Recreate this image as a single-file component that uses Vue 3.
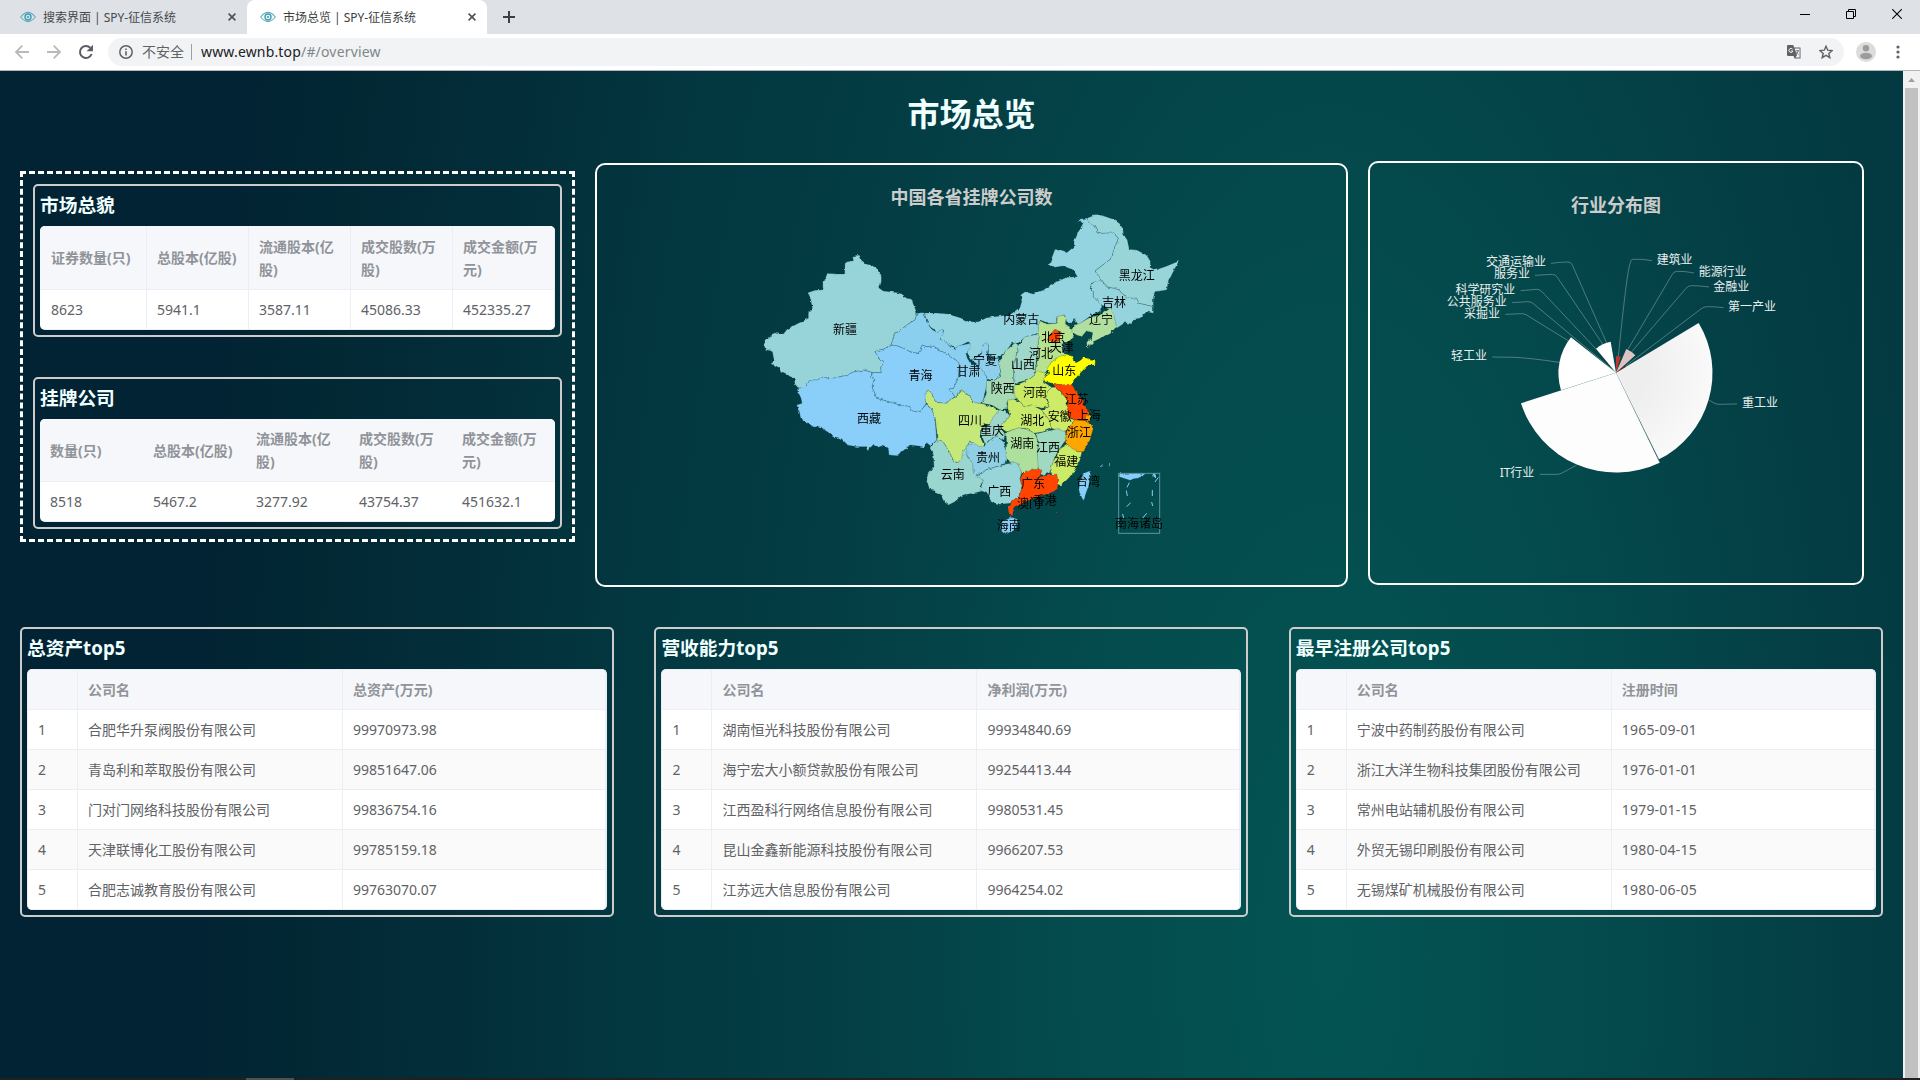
<script setup>
const marketOverview = {
  title: '市场总貌',
  bordered: true,
  heads: ['证券数量(只)', '总股本(亿股)', '流通股本(亿股)', '成交股数(万股)', '成交金额(万元)'],
  cells: ['8623', '5941.1', '3587.11', '45086.33', '452335.27'],
}
const listedCompanies = {
  title: '挂牌公司',
  bordered: false,
  heads: ['数量(只)', '总股本(亿股)', '流通股本(亿股)', '成交股数(万股)', '成交金额(万元)'],
  cells: ['8518', '5467.2', '3277.92', '43754.37', '451632.1'],
}
const summaries = [marketOverview, listedCompanies]

const rankings = [
  {
    title: '总资产top5',
    column: '总资产(万元)',
    rows: [
      ['合肥华升泵阀股份有限公司', '99970973.98'],
      ['青岛利和萃取股份有限公司', '99851647.06'],
      ['门对门网络科技股份有限公司', '99836754.16'],
      ['天津联博化工股份有限公司', '99785159.18'],
      ['合肥志诚教育股份有限公司', '99763070.07'],
    ],
  },
  {
    title: '营收能力top5',
    column: '净利润(万元)',
    rows: [
      ['湖南恒光科技股份有限公司', '99934840.69'],
      ['海宁宏大小额贷款股份有限公司', '99254413.44'],
      ['江西盈科行网络信息股份有限公司', '9980531.45'],
      ['昆山金鑫新能源科技股份有限公司', '9966207.53'],
      ['江苏远大信息股份有限公司', '9964254.02'],
    ],
  },
  {
    title: '最早注册公司top5',
    column: '注册时间',
    dates: true,
    rows: [
      ['宁波中药制药股份有限公司', '1965-09-01'],
      ['浙江大洋生物科技集团股份有限公司', '1976-01-01'],
      ['常州电站辅机股份有限公司', '1979-01-15'],
      ['外贸无锡印刷股份有限公司', '1980-04-15'],
      ['无锡煤矿机械股份有限公司', '1980-06-05'],
    ],
  },
]

// Province outlines, split by map sheet; each sheet has its own origin.
const sheets = [
  {
    at: 'translate(920 190) scale(.33333)',
    shapes: [
      ['#93d4e0', '12,369 50,369 85,372 120,383 150,395 175,395 200,383 240,378 270,374 300,352 305,335 302,315 315,305 340,312 370,300 400,280 440,262 472,260 460,240 430,228 405,232 387,225 405,178 440,188 462,170 462,155 475,125 490,98 478,95 480,87 502,84 508,100 530,112 535,130 580,128 595,145 580,185 575,205 525,243 545,270 515,280 510,295 520,305 520,320 545,345 545,362 515,375 475,405 462,385 455,400 440,395 432,375 410,385 410,400 385,400 360,390 355,405 358,430 320,440 290,460 275,460 255,490 230,505 205,500 205,465 190,465 185,490 155,510 142,490 140,475 150,460 145,455 105,475 85,465 60,448 72,420 50,425 30,410 20,390'],
      ['#97d5d8', '502,84 520,77 545,76 580,88 598,100 608,115 612,135 622,150 628,178 650,180 680,195 692,215 690,232 705,240 735,230 777,213 765,235 745,275 740,300 705,305 700,325 700,350 680,345 655,340 650,325 620,325 600,300 560,290 545,270 525,243 575,205 580,185 595,145 580,128 535,130 530,112 508,100'],
      ['#95d4dc', '545,270 560,290 600,300 620,325 650,325 655,340 680,345 700,350 700,370 680,365 660,385 640,388 635,402 615,398 590,415 580,380 560,352 545,345 520,320 520,305 510,285 530,272'],
    ],
  },
  {
    at: 'translate(740 200) scale(.33333)',
    shapes: [
      ['#97d4da', '355,165 361,177 378,192 395,196 410,205 424,228 424,245 418,265 430,273 475,278 490,285 500,295 514,297 524,322 531,340 525,360 500,375 485,388 478,395 465,398 460,415 452,438 430,447 405,455 413,468 420,480 432,488 422,502 424,518 395,517 370,510 340,516 320,526 270,537 250,530 235,540 210,540 195,562 175,565 165,553 162,535 140,525 122,517 118,503 92,490 103,485 97,455 76,448 71,430 85,412 110,397 130,402 142,387 175,370 205,355 205,338 217,325 212,295 203,278 225,271 250,269 248,255 262,220 290,222 314,222 315,190 322,185 340,182 338,168'],
      ['#89cff9', '175,565 195,562 210,540 235,540 250,530 270,537 320,526 340,516 370,510 395,517 395,530 402,540 397,560 410,595 430,600 470,612 510,620 516,632 540,637 548,625 560,612 572,622 585,650 588,690 590,720 572,738 560,728 553,742 535,738 510,735 490,752 470,767 447,765 445,745 425,738 415,742 400,735 388,742 384,757 378,740 350,740 320,735 300,715 285,712 262,695 232,678 222,682 182,655 178,635 170,615 186,610 183,595 176,580'],
      ['#8bcfef', '531,340 540,338 552,338 560,365 575,390 590,395 608,388 610,400 600,418 615,422 625,435 643,448 655,438 690,430 690,445 678,460 682,475 695,495 715,492 740,530 743,545 737,570 730,600 722,610 700,610 690,590 665,570 655,575 650,595 645,590 627,567 640,565 650,545 655,530 658,495 655,485 640,475 625,463 600,452 580,438 560,440 546,435 545,450 535,461 510,455 490,445 470,437 452,438 460,415 465,398 478,395 485,388 500,375 525,360'],
      ['#89cff9', '405,455 430,447 452,438 470,437 490,445 510,455 535,461 545,450 546,435 560,440 580,438 600,452 625,463 640,475 655,485 658,495 655,530 650,545 640,565 627,567 645,590 630,600 618,610 585,607 575,580 565,570 556,580 558,612 548,625 540,637 516,632 510,620 470,612 430,600 410,595 397,560 402,540 395,530 395,517 424,518 422,502 432,488 420,480 413,468'],
      ['#9ad6d0', '590,720 600,720 610,725 630,760 643,785 655,787 668,755 678,745 690,722 705,745 685,755 682,770 700,790 700,815 712,825 730,840 720,860 732,872 700,880 670,885 660,890 645,905 625,915 612,905 600,880 575,870 560,845 563,822 582,800 580,765 570,745'],
      ['#c5e87a', '565,570 575,580 585,607 618,610 630,600 645,592 652,592 655,575 665,570 690,590 698,608 722,610 760,622 778,632 772,648 758,658 755,680 735,670 722,690 720,710 735,740 725,743 700,735 690,722 678,745 668,755 665,775 655,787 643,785 630,760 610,725 600,720 592,728 590,690 585,650 572,622 556,605 556,580'],
    ],
  },
  {
    at: 'translate(960 310) scale(.33333)',
    shapes: [
      ['#8ecfee', '35,150 65,132 68,108 75,101 85,103 86,115 80,138 90,150 115,145 122,182 122,200 100,213 82,207 80,200 55,165'],
      ['#a6dab4', '165,98 175,105 168,140 160,170 162,215 170,225 165,245 170,265 160,270 140,275 143,295 120,300 95,285 65,280 80,250 78,240 80,212 100,213 122,200 122,182 115,160 140,120'],
      ['#9fd8cb', '175,105 195,80 238,72 235,100 232,120 228,160 225,195 205,210 162,220 160,170 168,140'],
      ['#b7e28f', '235,50 235,30 245,35 262,42 290,40 292,20 310,15 318,25 316,45 330,50 345,65 340,80 322,95 305,110 310,125 320,133 275,155 262,180 255,190 225,185 232,150 235,100'],
      ['#1b5355', '305,98 320,100 325,125 308,128'],
      ['#ff4500', '270,75 280,62 285,57 300,65 302,85 290,98 262,90'],
      ['#b1dfa0', '345,45 360,40 385,25 425,12 440,0 450,-5 460,10 470,50 455,65 430,80 400,95 382,115 380,100 395,85 398,68 380,62 365,80 350,75 335,65'],
      ['#9fd6cb', '88,345 100,320 118,300 135,300 150,318 140,330 120,350 135,375 130,390 110,378 90,390 75,405 62,372 70,350'],
      ['#8fd0e4', '18,408 40,400 62,410 75,405 90,390 110,378 130,395 138,415 142,445 138,460 120,465 95,475 75,480 55,495 40,490 38,460 22,440'],
      ['#cbea64', '162,228 205,210 225,195 228,182 260,190 250,215 275,232 262,245 258,270 268,290 245,295 215,285 195,290 180,275 165,262'],
      ['#c9e96a', '143,270 160,268 180,275 195,290 215,285 245,300 268,330 275,355 250,365 225,370 195,355 175,355 145,365 120,350 135,335 150,318 143,295'],
      ['#cdeb66', '258,265 262,245 275,232 285,232 300,245 320,265 318,280 325,290 328,325 345,330 325,350 315,370 290,360 275,355 268,330 245,300 268,290'],
      ['#addf9d', '138,365 145,365 175,353 200,358 225,370 235,400 232,430 238,460 235,480 205,490 185,490 175,465 150,460 138,440 140,400'],
      ['#a0d9c2', '228,372 265,362 290,357 315,365 322,385 310,400 300,415 285,440 275,470 268,490 245,495 235,480 232,430 235,400'],
      ['#cbea66', '320,402 335,408 355,425 366,425 360,450 345,480 330,500 305,525 295,525 290,500 270,490 278,460 300,415'],
      ['#98d5d9', '50,500 75,480 138,462 165,457 178,465 185,490 180,505 187,530 180,555 150,580 120,583 95,577 80,550 60,540 70,510'],
      ['#ffff00', '262,175 275,155 300,140 320,133 335,138 345,160 360,152 370,143 385,145 392,150 406,152 405,165 385,165 370,180 355,195 335,222 315,228 280,220 255,215 250,205 270,190'],
      ['#ff4500', '280,220 300,225 335,222 345,240 365,265 370,285 388,305 385,325 365,332 345,330 325,320 320,300 325,290 318,265 305,248 285,232'],
      ['#ffa500', '318,375 325,350 345,330 375,332 395,345 400,355 390,390 370,425 355,425 335,415 320,400'],
      ['#ffa500', '378,315 392,318 390,332 376,332'],
      ['#ff4500', '195,485 215,477 245,480 240,500 265,495 290,492 295,515 292,540 262,552 230,560 205,572 185,582 160,595 158,617 148,615 144,595 155,575 180,555 185,530 180,505'],
      ['#8bcdf5', '125,635 155,622 172,628 172,645 160,660 140,672 125,665'],
      ['#87cefa', '372,490 388,483 392,495 385,530 370,572 357,545 358,515'],
      ['#87cefa', '422,466 428,466 427,471 421,470'],
      ['#87cefa', '447,459 450,460 450,466 447,465'],
      ['#87cefa', '477,490 558,490 545,500 510,511 482,502'],
      ['#87cefa', '577,490 587,490 588,500 582,502'],
    ],
  },
]

// [name, x, y] — label centres in canvas pixels
const provinceLabels = [
  ['新疆', 845, 329.7], ['青海', 920.5, 375.7], ['甘肃', 968.5, 372], ['西藏', 869, 419],
  ['宁夏', 985, 361], ['四川', 970, 420.7], ['云南', 952.7, 475], ['黑龙江', 1136.7, 276],
  ['吉林', 1114, 302.3], ['辽宁', 1101, 319.7], ['内蒙古', 1021.3, 320], ['北京', 1053.3, 337.7],
  ['天津', 1061.7, 347.7], ['河北', 1041, 353.7], ['山西', 1023, 364.7], ['山东', 1064.3, 370.3],
  ['陕西', 1002.7, 388.7], ['河南', 1035, 392.7], ['江苏', 1076.7, 399.7], ['上海', 1088.7, 416],
  ['安徽', 1059.7, 416.3], ['湖北', 1032.3, 420.7], ['重庆', 992, 431], ['浙江', 1079, 432.7],
  ['湖南', 1022.3, 443.7], ['江西', 1048, 447.3], ['贵州', 988, 457.7], ['福建', 1066.3, 461.7],
  ['台湾', 1088, 481.3], ['广东', 1033, 483.3], ['香港', 1044.7, 500.3], ['澳门', 1029, 503.7],
  ['广西', 999.3, 492], ['海南', 1008.7, 525.7], ['南海诸岛', 1139, 524],
]

// [name, anchor, x, y, leader path]
const industries = [
  ['建筑业', 'start', 890, 329, 'M775,618 L788,495 C797,420 806,330 817,328 Q845,326 876,332'],
  ['能源行业', 'start', 1016, 366, 'M804,598 L935,376 Q941,364 950,364 Q975,363 1002,369'],
  ['金融业', 'start', 1060, 409, 'M816,604 L978,415 Q985,407 995,407 Q1018,407 1047,411'],
  ['第一产业', 'start', 1104, 471, 'M797,648 L1024,476 Q1032,470 1042,470 Q1065,470 1091,473'],
  ['重工业', 'start', 1146, 758, 'M1048,751 L1064,760 Q1070,763 1080,763 L1131,762'],
  ['交通运输业', 'end', 558, 336, 'M739,577 L637,345 Q633,336 624,336 Q600,336 573,340'],
  ['服务业', 'end', 510, 372, 'M728,582 L592,382 Q586,373 577,373 L525,376'],
  ['科学研究业', 'end', 466, 420, 'M708,597 L547,426 Q539,418 530,418 L482,422'],
  ['公共服务业', 'end', 440, 455, 'M766,666 L520,461 Q513,455 504,455 L456,458'],
  ['采掘业', 'end', 420, 491, 'M766,666 L626,573 L498,494 Q492,491 484,491 L436,493'],
  ['轻工业', 'end', 381, 617, 'M597,637 Q510,624 465,622 L397,621'],
  ['IT行业', 'end', 523, 968, 'M649,946 L608,968 Q600,973 590,973 L539,973'],
]
</script>

<template>
  <div class="window">
    <header class="tabs">
      <div v-for="(name, i) in ['搜索界面 | SPY-征信系统', '市场总览 | SPY-征信系统']" :key="name" class="tab" :class="{ active: i === 1 }">
        <svg class="eye" viewBox="0 0 16 12" width="16" height="12">
          <path d="M.7 6Q8-3.2 15.3 6Q8 15.2 .7 6Z" fill="none" stroke="#62aebd" stroke-width="1.1" />
          <circle cx="8" cy="6" r="3" fill="none" stroke="#3f9db3" stroke-width="1.4" />
          <circle cx="8" cy="6" r="1.1" fill="#3f9db3" />
        </svg>
        <span>{{ name }}</span>
        <svg class="shut" viewBox="0 0 8 8" width="8" height="8"><path d="M.6.6l6.8 6.8M7.4.6L.6 7.4" stroke="#4d5156" stroke-width="1.6" /></svg>
      </div>
      <svg class="plus" viewBox="0 0 12 12" width="12" height="12"><path d="M6 0v12M0 6h12" stroke="#3c4043" stroke-width="2" /></svg>
      <div class="controls">
        <svg width="10" height="10"><path d="M0 5.5h10" stroke="#000" /></svg>
        <svg width="10" height="10"><path d="M.5 2.5h7v7h-7zM2.5 2.5v-2h7v7h-2" fill="none" stroke="#000" /></svg>
        <svg width="10" height="10"><path d="M.2.2l9.6 9.6M9.8.2L.2 9.8" stroke="#000" stroke-width="1.1" /></svg>
      </div>
    </header>

    <div class="toolbar">
      <svg class="nav" viewBox="0 0 16 16" width="16" height="16"><path d="M15 8H2M8.3 1.7L2 8l6.3 6.3" fill="none" stroke="#bababa" stroke-width="1.8" /></svg>
      <svg class="nav" viewBox="0 0 16 16" width="16" height="16"><path d="M1 8h13M7.7 1.7L14 8l-6.3 6.3" fill="none" stroke="#bababa" stroke-width="1.8" /></svg>
      <svg class="nav" viewBox="0 0 16 16" width="16" height="16">
        <path d="M13.6 10A6 6 0 1 1 12.3 3.8" fill="none" stroke="#5a5e63" stroke-width="2" />
        <path d="M15 .8v6.4H8.6z" fill="#5a5e63" />
      </svg>
      <div class="omnibox">
        <svg viewBox="0 0 14 14" width="14" height="14">
          <circle cx="7" cy="7" r="6.2" fill="none" stroke="#5f6368" stroke-width="1.5" />
          <path d="M7 6.2v4.2M7 3.5v1.5" stroke="#5f6368" stroke-width="1.6" />
        </svg>
        <span class="insecure">不安全</span>
        <span class="bar"></span>
        <span class="url">www.ewnb.top<i>/#/overview</i></span>
        <svg class="translate" viewBox="0 0 14 14" width="14" height="14">
          <path d="M1 0h5.2l1 2.6h6.3v10.9H7.4L6.6 11H1Q0 11 0 10V1Q0 0 1 0Z" fill="#5f6368" />
          <path d="M7.6 3.6h5v9h-4.2l1.6-2z" fill="#f1f3f4" />
          <path d="M5.6 4.2A2 2 0 1 0 5.9 6H4" fill="none" stroke="#f1f3f4" stroke-width="1" />
          <path d="M8.6 5.8h3.4M10.3 5v.8M11.4 5.8Q10.8 8 9.2 9M9.3 7Q10.2 8.6 11.6 9.6" fill="none" stroke="#5f6368" stroke-width=".8" />
        </svg>
        <svg class="star" viewBox="0 0 14 14" width="14" height="14"><path d="M7 1.2l1.7 4 4.4.4-3.3 2.9 1 4.2L7 10.4l-3.8 2.3 1-4.2L.9 5.6l4.4-.4z" fill="none" stroke="#5f6368" stroke-width="1.4" /></svg>
      </div>
      <svg class="avatar" viewBox="0 0 20 20" width="20" height="20">
        <circle cx="10" cy="10" r="10" fill="#dcdcdc" />
        <circle cx="10" cy="6.2" r="3.2" fill="#9c9c9c" />
        <ellipse cx="10" cy="14" rx="6" ry="3.2" fill="#9c9c9c" />
      </svg>
      <svg class="dots" viewBox="0 0 4 14" width="4" height="14"><g fill="#5f6368"><circle cx="2" cy="2" r="1.6" /><circle cx="2" cy="7" r="1.6" /><circle cx="2" cy="12" r="1.6" /></g></svg>
    </div>

    <div class="viewport">
      <main class="page">
        <h1>市场总览</h1>

        <section class="upper">
          <div class="dashed">
            <article v-for="s in summaries" :key="s.title" class="card" :class="{ plain: !s.bordered }">
              <h3>{{ s.title }}</h3>
              <div class="table">
                <div class="row head"><div v-for="h in s.heads" :key="h" class="cell">{{ h }}</div></div>
                <div class="row"><div v-for="c in s.cells" :key="c" class="cell">{{ c }}</div></div>
              </div>
            </article>
          </div>

          <div class="panel map">
            <svg viewBox="597 165 749 420" width="749" height="420">
              <defs>
                <filter id="coast" x="-2%" y="-2%" width="104%" height="104%">
                  <feTurbulence type="fractalNoise" baseFrequency=".22" numOctaves="2" seed="4" result="n" />
                  <feDisplacementMap in="SourceGraphic" in2="n" scale="3.2" xChannelSelector="R" yChannelSelector="G" />
                </filter>
              </defs>
              <text class="chart-title" x="971.5" y="204">中国各省挂牌公司数</text>
              <g filter="url(#coast)" class="land">
                <g v-for="sheet in sheets" :key="sheet.at" :transform="sheet.at">
                  <polygon v-for="(shape, i) in sheet.shapes" :key="i" :points="shape[1]" :fill="shape[0]" />
                </g>
              </g>
              <g transform="translate(960 310) scale(.33333)">
                <rect x="476" y="490" width="123" height="180" fill="none" stroke="#5d93a4" stroke-width="3" />
                <path d="M508,518l-7,14M499,542l3,16M512,578l-12,12M488,612l3,14M577,540v18M575,576l3,12M595,502l-10,14M560,610l-12,14" stroke="#87cefa" stroke-width="3" />
                <circle cx="290" cy="607" r="2" fill="#b33c10" />
              </g>
              <text v-for="p in provinceLabels" :key="p[0]" class="province" :x="p[1]" :y="p[2] + 4.2">{{ p[0] }}</text>
            </svg>
          </div>

          <div class="panel pie">
            <svg viewBox="1370 163 492 420" width="492" height="420">
              <defs>
                <radialGradient id="grey" gradientUnits="userSpaceOnUse" cx="768" cy="668" r="300">
                  <stop offset=".3" stop-color="#eeeeee" /><stop offset="1" stop-color="#fafafa" />
                </radialGradient>
              </defs>
              <text class="chart-title" x="1616" y="212">行业分布图</text>
              <g transform="translate(1360 150) scale(.33333)">
                <path d="M768,668 L1016,519 A290,290 0 0 1 897,928 Z" fill="url(#grey)" />
                <path d="M768,668 L899,938 A300,300 0 0 1 483,760 Z" fill="#fdfdfd" />
                <path d="M768,668 L603,721 A173,173 0 0 1 633,562 Z" fill="#fff" />
                <path d="M768,668 L708,596 A94,94 0 0 1 752,575 Z" fill="#fff" />
                <path d="M768,668 L768,618 A50,50 0 0 1 782,620 Z" fill="#c23531" />
                <path d="M768,668 L799,597 A78,78 0 0 1 826,616 Z" fill="#dcc4c4" />
                <path d="M768,668 L790,650 L798,650 Z" fill="#7a2624" />
                <path d="M768,668 L899,938 M768,668 L603,721" stroke="#c6d6d3" stroke-width="1.4" stroke-dasharray="5 3" />
                <g fill="none" stroke="#fff" stroke-opacity=".34" stroke-width="2.6">
                  <path v-for="d in industries" :key="d[0]" :d="d[4]" />
                </g>
                <text v-for="d in industries" :key="d[0]" class="industry" :text-anchor="d[1]" :x="d[2]" :y="d[3] + 13.5">{{ d[0] }}</text>
              </g>
            </svg>
          </div>
        </section>

        <section class="lower">
          <article v-for="r in rankings" :key="r.title" class="card rank" :class="{ dates: r.dates }">
            <h3>{{ r.title }}</h3>
            <div class="table">
              <div class="row head"><div class="cell"></div><div class="cell">公司名</div><div class="cell">{{ r.column }}</div></div>
              <div v-for="(row, i) in r.rows" :key="row[0]" class="row">
                <div class="cell">{{ i + 1 }}</div><div class="cell">{{ row[0] }}</div><div class="cell value">{{ row[1] }}</div>
              </div>
            </div>
          </article>
        </section>
      </main>
      <aside class="scrollbar">
        <svg viewBox="0 0 17 17" width="17" height="17"><path d="M5 11L8.5 7 12 11z" fill="#a0a0a0" /></svg>
        <div class="thumb"></div>
      </aside>
    </div>
    <footer class="taskbar"><span></span></footer>
  </div>
</template>

<style>
html, body { margin: 0; overflow: hidden; }
</style>

<style scoped>
* { box-sizing: border-box; }
.window {
  width: 1920px; height: 1080px; display: flex; flex-direction: column; overflow: hidden;
  font-family: "Noto Sans", "Noto Sans CJK SC", sans-serif; background: #fff;
}
svg { display: block; flex: none; }

.tabs { height: 34px; flex: none; display: flex; align-items: center; background: #dee1e6; padding-left: 7px; }
.tab { width: 240px; height: 34px; display: flex; align-items: center; padding: 0 12px 0 13px; font-size: 12px; line-height: 34px; color: #45494d; white-space: nowrap; }
.tab span { margin-left: 7px; flex: 1; letter-spacing: -.02px; padding-top: 1px; }
.tab.active { background: #fff; border-radius: 8px 8px 0 0; color: #3c4043; }
.shut { margin-right: -1px; }
.plus { margin-left: 16px; }
.controls { margin-left: auto; display: flex; gap: 36px; padding-right: 18px; height: 34px; padding-top: 9px; }

.toolbar { height: 37px; flex: none; display: flex; align-items: center; padding: 0 19px 1px 14px; border-bottom: 1px solid #b6b4b6; }
.nav { margin-right: 16px; }
.omnibox { width: 1736px; height: 28px; margin-left: -2px; border-radius: 14px; background: #f1f3f4; display: flex; align-items: center; padding: 0 11px; font-size: 14px; line-height: 28px; }
.insecure { margin-left: 9px; color: #5f6368; width: 45px; }
.bar { width: 1px; height: 16px; background: #9aa0a6; margin-left: 4px; }
.url { margin-left: 9px; color: #202124; letter-spacing: .17px; }
.url i { font-style: normal; color: #80868b; }
.translate { margin-left: auto; }
.star { margin-left: 18px; }
.avatar { margin-left: 12px; }
.dots { margin-left: 20px; }

.viewport { flex: 1; min-height: 0; display: flex; }
.page {
  flex: 1; min-width: 0; padding: 0 20px;
  background: radial-gradient(ellipse 1140px 2900px at 1330px 880px, #045454 0%, #044a4c 25%, #043d44 46%, #033841 61%, #032f3a 75%, #022834 90%, #022333 100%);
}
h1 { margin: 0; height: 90px; padding: 0 0 4px 40px; text-align: center; font-size: 32px; line-height: 86px; font-weight: 700; color: #f0ffff; }
.upper { display: flex; align-items: flex-start; height: 466px; }
.dashed { width: 555px; height: 371px; margin-top: 10px; border: 3px dashed #fff; padding: 10px; display: flex; flex-direction: column; gap: 40px; }
.card { border: 2px solid #ccc; border-radius: 5px; padding: 5px; height: 153px; }
.card.plain { height: 152px; }
h3 { margin: 0; height: 35px; font-size: 18.72px; line-height: 27px; font-weight: 700; color: #f0ffff; white-space: nowrap; }
.table { border-radius: 5px; overflow: hidden; background: #fff; color: #606266; font-size: 14px; line-height: 23px; border-bottom: 1px solid #ebeef5; }
.row { display: grid; grid-template-columns: 107px 102px 102px 102px 102px; height: 39px; }
.plain .row { grid-template-columns: repeat(5, 103px); }
.head { height: 64px; background: #f5f7fa; color: #909399; font-weight: 700; border-bottom: 1px solid #ebeef5; }
.plain .head { height: 63px; }
.cell { display: flex; align-items: center; padding: 0 10px; border-right: 1px solid #ebeef5; word-break: break-all; }
.cell:first-child { padding-left: 11px; }
.plain .cell { border-right: 0; }
.plain .cell:first-child { padding-left: 10px; }

.panel { border: 2px solid #fff; border-radius: 10px; height: 424px; margin-left: 20px; }
.map { width: 753px; margin-top: 2px; }
.pie { width: 496px; }
.chart-title { font-size: 18px; font-weight: 700; fill: #ccc; text-anchor: middle; }
.land polygon { stroke: rgba(20, 60, 70, .5); stroke-width: 1.4; }
.province { font-size: 12px; fill: #000; text-anchor: middle; }
.industry { font-size: 36px; fill: #e9efef; }

.lower { display: grid; grid-template-columns: repeat(3, 594px); column-gap: 40.4px; }
.rank { height: 290px; }
.rank .row { grid-template-columns: 50px 265px 1fr; height: 40px; border-bottom: 1px solid #ebeef5; }
.rank .table { border: 1px solid #ebeef5; border-bottom: 0; }
.rank .cell:first-child { padding-left: 10px; }
.rank .cell { white-space: nowrap; }
.rank .row:nth-child(odd):not(.head) { background: #fafafa; }
.dates .value { letter-spacing: .2px; }

.scrollbar { width: 17px; flex: none; background: #f1f1f1; display: flex; flex-direction: column; align-items: center; }
.thumb { width: 13px; flex: 1; background: #c1c1c1; }
.taskbar { height: 2px; flex: none; background: #202020; padding-left: 246px; }
.taskbar span { display: block; width: 48px; height: 2px; background: #505050; }
</style>
